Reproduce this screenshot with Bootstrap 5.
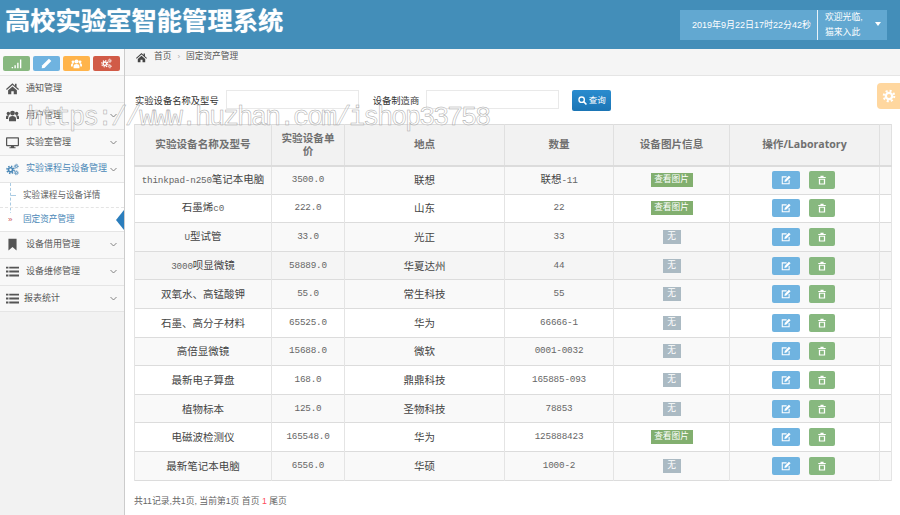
<!DOCTYPE html>
<html lang="zh"><head><meta charset="utf-8"><title>高校实验室智能管理系统</title>
<link rel="stylesheet" href="https://cdn.jsdelivr.net/npm/bootstrap@5.3.0/dist/css/bootstrap.min.css">
<style>
html,body{height:515px;overflow:hidden}
body{font-family:"Liberation Sans","Noto Sans CJK SC",sans-serif;font-size:9px;color:#555;background:#fff;position:relative}
.topbar{height:49px;background:#438eb9;padding:0 13px 0 5px}
.apptitle{font-size:25.3px;font-weight:700;color:#fff;line-height:42px;margin:0 0 7px;text-shadow:0 0 1px rgba(255,255,255,.6)}
.userbox{height:30px;background:#62a8d1;color:#fff}
.clockcell{width:138px;padding-right:6px;text-align:right;border-right:1px solid #e8f3f9;height:30px;line-height:30px;font-size:9px;white-space:nowrap}
.welcome{width:69px;padding-left:7px;font-size:8.8px;line-height:14.5px;color:#fff;position:relative}
.caretd{position:absolute;right:6px;top:12px;width:0;height:0;border:3.5px solid transparent;border-top:4px solid #fff;border-bottom:0}
.shell{height:466px}
.sidearea{width:125px;background:#f2f2f2;border-right:1px solid #ccc;flex:none}
.shortrow{height:27px;padding:7px 4px 0 3px;gap:3px;background:#fafafa;border-bottom:1px solid #e5e5e5}
.shortbtn{width:27px;height:15px;border-radius:2px;color:#fff}
.shortbtn svg{width:11px;height:11px}
.bg-g{background:#87b87f}.bg-b{background:#6fb3e0}.bg-o{background:#ffb44b}.bg-r{background:#d15b47}
.menuline{height:26.75px;background:#f8f8f8;border-bottom:1px solid #e5e5e5;padding:0 7px 0 5px;color:#585858;font-size:9px}
.menuline.openline{color:#4b88b7;background:#fafafa}
.menuline .mico{width:15px;height:13px;margin-right:6px;color:#555;flex:none}
.menuline.openline .mico{color:#4b88b7}
.menuline .mlabel{flex:1;white-space:nowrap}
.menuline .tight{margin-left:-2px}
.chev{width:7px;height:5px;color:#777;flex:none}
.submenu{position:relative;background:#fff;border-bottom:1px solid #e5e5e5}
.submenu:before{content:"";position:absolute;left:10px;top:0;bottom:6px;border-left:1px dashed #a9cbe3}
.subline{height:24px;padding-left:23px;font-size:8.6px;color:#616161;position:relative}
.subline+.subline{border-top:1px dashed #e4e4e4}
.subline.curr{color:#4b88b7}
.subline .dash{position:absolute;left:11px;top:12px;width:5px;border-top:1px dashed #a9cbe3}
.subline .rr{position:absolute;left:8px;top:5px;color:#c9545a;font-size:8px;line-height:13px;background:#fff}
.subline .pointer{position:absolute;right:0;top:2px;width:0;height:0;border:solid transparent;border-width:10px 8px 10px 0;border-right-color:#2b7dbc}
.crumbs{height:27px;background:#f5f5f5;border-bottom:1px solid #e5e5e5;padding-left:11px;font-size:8.7px;color:#555;padding-bottom:10px}
.crumbs svg{width:11px;height:11px;margin-right:7px;color:#444}
.crumbs i{font-style:normal;color:#aaa;margin:0 6px;font-size:8px}
.workarea{padding:14px 9px 0 9px;flex:1;min-width:0}
.filterbar{height:34px;align-items:flex-start}
.filterlabel{font-size:9.3px;color:#333;margin:5px 7px 0 1px;white-space:nowrap}
.filterinput{width:133px;height:19px;border:1px solid #e9e9e9;background:#fff;border-radius:0;padding:0 3px;margin-right:13px}
.querybtn{width:39px;height:21px;background:linear-gradient(#2a8ccf,#1b75b5);border:0;border-radius:2px;color:#fff;font-size:8.5px;padding:0;gap:2px}
.querybtn svg{width:9px;height:9px}
.datagrid{width:757px;table-layout:fixed;margin:0;border-color:#dcdcdc;font-size:10.5px;color:#444;--bs-table-color:#444;--bs-table-striped-color:#444;--bs-table-striped-bg:#f9f9f9;--bs-table-border-color:#e0e0e0}
.datagrid th{background:#f2f2f2;--bs-table-bg:#f2f2f2;height:41px;padding:0 8px;font-family:"Open Sans","Noto Sans CJK SC",sans-serif;font-weight:700;color:#707070;text-align:center;vertical-align:middle;line-height:13px;font-size:10.6px;border-color:#e0e0e0;border-bottom:2px solid #dcdcdc}
.datagrid td{height:28.6px;padding:0 2px;text-align:center;vertical-align:middle;line-height:14px;border-color:#e4e4e4}
.datagrid .hoverrow td{--bs-table-bg-state:#f5f5f5;background-color:#f5f5f5}
.mono{font-family:"Liberation Mono","Noto Sans CJK SC",monospace;font-size:9.3px;letter-spacing:-.18px}
.datagrid>tbody>tr>td.mono,.datagrid>tbody>tr>td>.mono{color:#666}
.tagok,.tagno{display:inline-block;height:14px;line-height:12px;color:#fff;font-size:8.7px;vertical-align:top}
.tagok{width:42px;background:#82af6f}
.tagno{width:18px;background:#abbac3}
.rowbtn{height:18px;border-radius:2px;color:#fff;display:inline-flex;align-items:center;justify-content:center;vertical-align:middle}
.rowbtn svg{width:10px;height:10px}
.rb-e{width:28px;background:#6fb3e0;margin-right:9px}
.rb-d{width:26px;background:#87b87f;margin-right:3px}
.pagerline{margin-top:14px;font-size:8.8px;color:#666;padding-left:0}
.pagerline b{color:#ff4b5c;font-weight:400}
.geartab{position:absolute;right:0;top:83px;width:23px;height:26px;background:#ffd79f;border-radius:4px 0 0 4px;color:#fff}
.geartab svg{width:14px;height:14px}
.stamp{position:absolute;left:27px;top:101px;font-family:"Liberation Mono",monospace;font-size:27px;letter-spacing:-2.2px;line-height:34px;color:rgba(255,255,255,.45);-webkit-text-stroke:.5px #a8a8a8;white-space:nowrap;pointer-events:none}
</style></head><body>
<svg width="0" height="0" class="d-block position-absolute">
<defs>
<symbol id="ihome" viewBox="0 0 16 16"><path fill="currentColor" d="M8 1.5 0 8.6l1 1.1L8 3.6l7 6.1 1-1.1-3-2.6V2h-2v2.5zM2.6 10.2V15h3.9v-3.6h3V15h3.9v-4.8L8 5.5z"/></symbol>
<symbol id="iusers" viewBox="0 0 16 16"><g fill="currentColor"><circle cx="8" cy="5" r="3"/><circle cx="2.9" cy="5.6" r="2.1"/><circle cx="13.1" cy="5.6" r="2.1"/><path d="M3.7 15v-3.2C3.7 9.7 5.5 8.6 8 8.6s4.3 1.1 4.3 3.2V15z"/><path d="M0 12.3V10c0-1.3 1-2.2 2.6-2.2.5 0 1 .1 1.4.3-1 .8-1.4 2-1.4 3.4v.8zM16 12.3V10c0-1.3-1-2.2-2.6-2.2-.5 0-1 .1-1.4.3 1 .8 1.4 2 1.4 3.4v.8z"/></g></symbol>
<symbol id="idesk" viewBox="0 0 16 16"><path fill="currentColor" fill-rule="evenodd" d="M1 1.5h14a1 1 0 0 1 1 1v9a1 1 0 0 1-1 1h-5v1.3h1.8V15H4.2v-1.2H6v-1.3H1a1 1 0 0 1-1-1v-9a1 1 0 0 1 1-1zM1.5 3v8h13V3z"/></symbol>
<symbol id="igear" viewBox="0 0 16 16"><g fill="none" stroke="currentColor"><circle cx="8" cy="8" r="3.6" stroke-width="2.6"/><circle cx="8" cy="8" r="6" stroke-width="2.4" stroke-dasharray="2.35 2.36"/></g></symbol>
<symbol id="icogs" viewBox="0 0 16 16"><g fill="none" stroke="currentColor"><circle cx="5.6" cy="8.4" r="2.5" stroke-width="2"/><circle cx="5.6" cy="8.4" r="4.4" stroke-width="1.9" stroke-dasharray="1.75 1.7"/><circle cx="12.7" cy="4" r="1.4" stroke-width="1.2"/><circle cx="12.7" cy="4" r="2.5" stroke-width="1.1" stroke-dasharray="1 .98"/><circle cx="12.7" cy="12" r="1.4" stroke-width="1.2"/><circle cx="12.7" cy="12" r="2.5" stroke-width="1.1" stroke-dasharray="1 .98"/></g></symbol>
<symbol id="ibook" viewBox="0 0 16 16"><path fill="currentColor" d="M3 1h10v14.5L8 11.2 3 15.5z"/></symbol>
<symbol id="ilist" viewBox="0 0 16 16"><path fill="currentColor" d="M0 2h3v2.4H0zM4 2h12v2.4H4zM0 6.8h3v2.4H0zM4 6.8h12v2.4H4zM0 11.6h3V14H0zM4 11.6h12V14H4z"/></symbol>
<symbol id="ichev" viewBox="0 0 14 10"><path fill="none" stroke="currentColor" stroke-width="1.8" d="M1 2l6 6 6-6"/></symbol>
<symbol id="isignal" viewBox="0 0 16 16"><path fill="currentColor" d="M1 13h2v2H1zM5 10.5h2V15H5zM9 7h2v8H9zM13 2h2v13h-2z"/></symbol>
<symbol id="ipen" viewBox="0 0 16 16"><path fill="currentColor" d="M11.5 1 15 4.5 5 14.5 1 15l.5-4z"/></symbol>
<symbol id="iedit" viewBox="0 0 16 16"><path fill="none" stroke="currentColor" stroke-width="1.7" d="M9 3H2v11h11V8"/><path fill="currentColor" d="M12.6 1 15.4 3.6 8.6 10.4 5.5 11l.5-3.2z"/></symbol>
<symbol id="itrash" viewBox="0 0 16 16"><path fill="currentColor" fill-rule="evenodd" d="M5.5 1h5v2H14v1.8H2V3h3.5zM3 6h10v9H3zM5 7.6v5.8h6V7.6z"/></symbol>
<symbol id="isearch" viewBox="0 0 16 16"><circle cx="6.5" cy="6.5" r="4.8" fill="none" stroke="currentColor" stroke-width="2.4"/><path stroke="currentColor" stroke-width="2.8" d="m10 10 5 5"/></symbol>
</defs></svg>

<header class="topbar d-flex justify-content-between align-items-center">
  <h1 class="apptitle">高校实验室智能管理系统</h1>
  <div class="userbox d-flex align-items-center">
    <div class="clockcell">2019年9月22日17时22分42秒</div>
    <div class="welcome">欢迎光临,<br>猫来入此<span class="caretd"></span></div>
  </div>
</header>

<div class="shell d-flex">
  <nav class="sidearea">
    <div class="shortrow d-flex">
      <span class="shortbtn bg-g d-flex align-items-center justify-content-center"><svg><use href="#isignal"/></svg></span>
      <span class="shortbtn bg-b d-flex align-items-center justify-content-center"><svg><use href="#ipen"/></svg></span>
      <span class="shortbtn bg-o d-flex align-items-center justify-content-center"><svg><use href="#iusers"/></svg></span>
      <span class="shortbtn bg-r d-flex align-items-center justify-content-center"><svg><use href="#icogs"/></svg></span>
    </div>
    <div class="menuline d-flex align-items-center"><svg class="mico"><use href="#ihome"/></svg><span class="mlabel">通知管理</span></div>
    <div class="menuline d-flex align-items-center"><svg class="mico"><use href="#iusers"/></svg><span class="mlabel">用户管理</span><svg class="chev"><use href="#ichev"/></svg></div>
    <div class="menuline d-flex align-items-center"><svg class="mico"><use href="#idesk"/></svg><span class="mlabel">实验室管理</span><svg class="chev"><use href="#ichev"/></svg></div>
    <div class="menuline openline d-flex align-items-center"><svg class="mico"><use href="#icogs"/></svg><span class="mlabel">实验课程与设备管理</span><svg class="chev"><use href="#ichev"/></svg></div>
    <div class="submenu">
      <div class="subline d-flex align-items-center"><span class="dash"></span>实验课程与设备详情</div>
      <div class="subline curr d-flex align-items-center"><span class="rr">»</span>固定资产管理<span class="pointer"></span></div>
    </div>
    <div class="menuline d-flex align-items-center"><svg class="mico"><use href="#ibook"/></svg><span class="mlabel">设备借用管理</span><svg class="chev"><use href="#ichev"/></svg></div>
    <div class="menuline d-flex align-items-center"><svg class="mico"><use href="#ilist"/></svg><span class="mlabel">设备维修管理</span><svg class="chev"><use href="#ichev"/></svg></div>
    <div class="menuline d-flex align-items-center"><svg class="mico"><use href="#ilist"/></svg><span class="mlabel tight">报表统计</span><svg class="chev"><use href="#ichev"/></svg></div>
  </nav>

  <main class="flex-grow-1" style="min-width:0">
    <div class="crumbs d-flex align-items-center"><svg><use href="#ihome"/></svg>首页<i>›</i>固定资产管理</div>
    <div class="workarea">
      <form class="filterbar d-flex">
        <label class="filterlabel">实验设备名称及型号</label><input class="filterinput" type="text">
        <label class="filterlabel">设备制造商</label><input class="filterinput" type="text">
        <button type="button" class="querybtn d-flex align-items-center justify-content-center"><svg><use href="#isearch"/></svg>查询</button>
      </form>
      <table class="table table-bordered table-striped datagrid">
        <colgroup><col style="width:137px"><col style="width:73px"><col style="width:160px"><col style="width:109px"><col style="width:116px"><col style="width:150px"><col style="width:12px"></colgroup>
        <thead><tr><th>实验设备名称及型号</th><th>实验设备单价</th><th>地点</th><th>数量</th><th>设备图片信息</th><th>操作/Laboratory</th><th></th></tr></thead>
        <tbody>
          <tr><td><span class="mono">thinkpad-n250</span>笔记本电脑</td><td class="mono">3500.0</td><td>联想</td><td>联想<span class="mono">-11</span></td><td><span class="tagok">查看图片</span></td><td><span class="rowbtn rb-e"><svg><use href="#iedit"/></svg></span><span class="rowbtn rb-d"><svg><use href="#itrash"/></svg></span></td><td></td></tr>
          <tr><td>石墨烯<span class="mono">c0</span></td><td class="mono">222.0</td><td>山东</td><td class="mono">22</td><td><span class="tagok">查看图片</span></td><td><span class="rowbtn rb-e"><svg><use href="#iedit"/></svg></span><span class="rowbtn rb-d"><svg><use href="#itrash"/></svg></span></td><td></td></tr>
          <tr><td><span class="mono">U</span>型试管</td><td class="mono">33.0</td><td>光正</td><td class="mono">33</td><td><span class="tagno">无</span></td><td><span class="rowbtn rb-e"><svg><use href="#iedit"/></svg></span><span class="rowbtn rb-d"><svg><use href="#itrash"/></svg></span></td><td></td></tr>
          <tr class="hoverrow"><td><span class="mono">3000</span>呗显微镜</td><td class="mono">58889.0</td><td>华夏达州</td><td class="mono">44</td><td><span class="tagno">无</span></td><td><span class="rowbtn rb-e"><svg><use href="#iedit"/></svg></span><span class="rowbtn rb-d"><svg><use href="#itrash"/></svg></span></td><td></td></tr>
          <tr><td>双氧水、高锰酸钾</td><td class="mono">55.0</td><td>常生科技</td><td class="mono">55</td><td><span class="tagno">无</span></td><td><span class="rowbtn rb-e"><svg><use href="#iedit"/></svg></span><span class="rowbtn rb-d"><svg><use href="#itrash"/></svg></span></td><td></td></tr>
          <tr><td>石墨、高分子材料</td><td class="mono">65525.0</td><td>华为</td><td class="mono">66666-1</td><td><span class="tagno">无</span></td><td><span class="rowbtn rb-e"><svg><use href="#iedit"/></svg></span><span class="rowbtn rb-d"><svg><use href="#itrash"/></svg></span></td><td></td></tr>
          <tr><td>高倍显微镜</td><td class="mono">15688.0</td><td>微软</td><td class="mono">0001-0032</td><td><span class="tagno">无</span></td><td><span class="rowbtn rb-e"><svg><use href="#iedit"/></svg></span><span class="rowbtn rb-d"><svg><use href="#itrash"/></svg></span></td><td></td></tr>
          <tr><td>最新电子算盘</td><td class="mono">168.0</td><td>鼎鼎科技</td><td class="mono">165885-093</td><td><span class="tagno">无</span></td><td><span class="rowbtn rb-e"><svg><use href="#iedit"/></svg></span><span class="rowbtn rb-d"><svg><use href="#itrash"/></svg></span></td><td></td></tr>
          <tr><td>植物标本</td><td class="mono">125.0</td><td>圣物科技</td><td class="mono">78853</td><td><span class="tagno">无</span></td><td><span class="rowbtn rb-e"><svg><use href="#iedit"/></svg></span><span class="rowbtn rb-d"><svg><use href="#itrash"/></svg></span></td><td></td></tr>
          <tr><td>电磁波检测仪</td><td class="mono">165548.0</td><td>华为</td><td class="mono">125888423</td><td><span class="tagok">查看图片</span></td><td><span class="rowbtn rb-e"><svg><use href="#iedit"/></svg></span><span class="rowbtn rb-d"><svg><use href="#itrash"/></svg></span></td><td></td></tr>
          <tr><td>最新笔记本电脑</td><td class="mono">6556.0</td><td>华硕</td><td class="mono">1000-2</td><td><span class="tagno">无</span></td><td><span class="rowbtn rb-e"><svg><use href="#iedit"/></svg></span><span class="rowbtn rb-d"><svg><use href="#itrash"/></svg></span></td><td></td></tr>
        </tbody>
      </table>
      <div class="pagerline">共11记录,共1页, 当前第1页 首页 <b>1</b> 尾页</div>
    </div>
  </main>
</div>
<div class="geartab d-flex align-items-center justify-content-center"><svg><use href="#igear"/></svg></div>
<div class="stamp">https://www.huzhan.com/ishop33758</div>
</body></html>
